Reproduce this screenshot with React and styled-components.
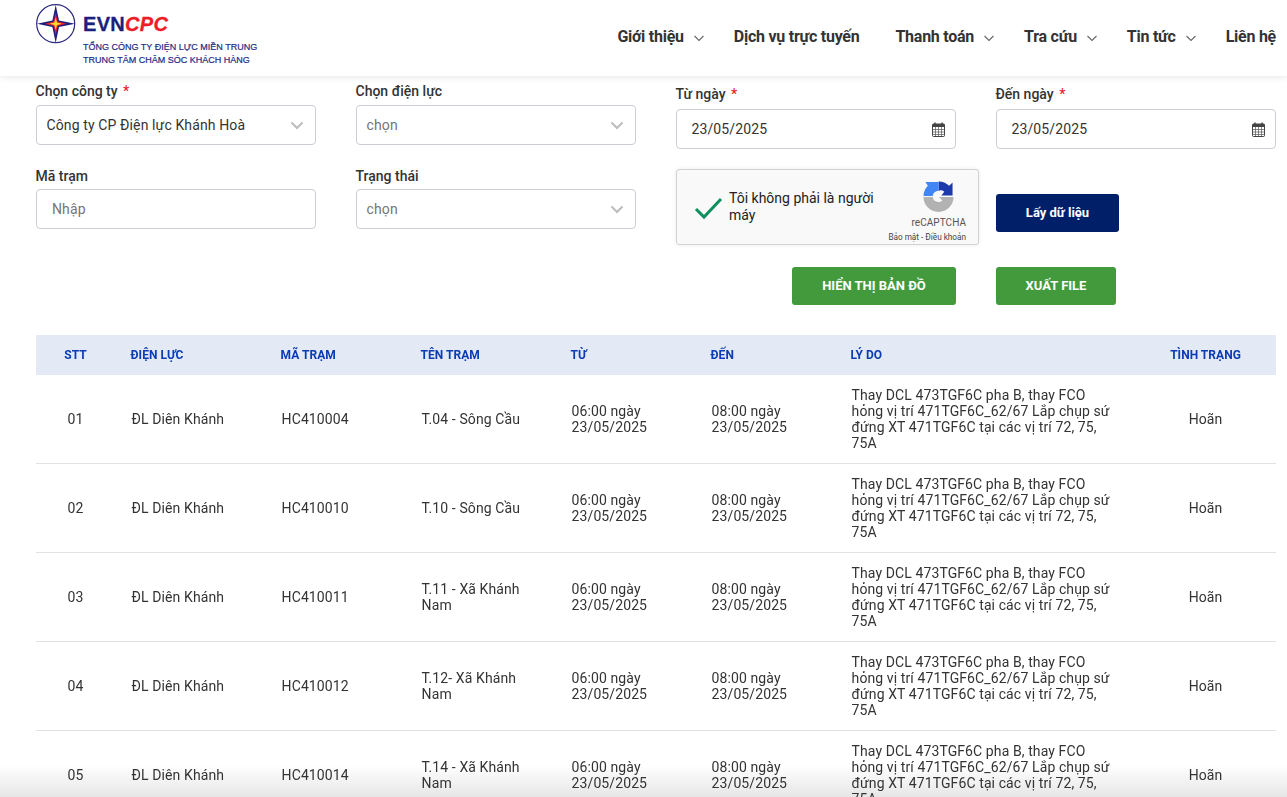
import React from "react";
import styled, { createGlobalStyle } from "styled-components";

const Global = createGlobalStyle`
  html, body { margin: 0; padding: 0; height: 100%; overflow: hidden; background: #fff; }
  body { font-family: Roboto, "Liberation Sans", sans-serif; color: #333; }
  * { box-sizing: border-box; }
`;

const Header = styled.header`
  height: 76px; display: flex; align-items: center; justify-content: space-between;
  padding: 0 11px 0 36px; background: #fff; box-shadow: 0 1px 7px rgba(0,0,0,.1);
  position: relative; z-index: 2;
`;
const Brand = styled.div`display: flex; align-items: flex-start; gap: 7px; height: 76px; padding-top: 4px;`;
const BrandText = styled.div`display: flex; flex-direction: column; padding-top: 9px;`;
const BrandName = styled.div`
  font-family: "Liberation Sans", Arial, sans-serif; font-size: 20px; line-height: 22px; font-weight: 700;
  color: #1b1f7e; letter-spacing: .3px; margin-bottom: 6px; -webkit-text-stroke: .3px currentColor;
`;
const BrandRed = styled.span`color: #ee1c25; font-style: italic;`;
const BrandLine = styled.div`
  font-family: "Liberation Sans", Arial, sans-serif; font-size: 9px; line-height: 13px; color: #1f2a86;
  white-space: nowrap; -webkit-text-stroke: .2px currentColor;
`;
const Nav = styled.nav`display: flex; align-items: center; height: 68px; margin-top: -4px; gap: 29px;`;
const NavItem = styled.div`
  display: flex; align-items: center; gap: 9px; font-size: 16px; font-weight: 700; color: #333;
  white-space: nowrap; letter-spacing: -.25px; padding-right: ${p => p.$pad || 0}px;
`;
const NavChevron = styled.svg`width: 12px; height: 12px; fill: none; stroke: #666; stroke-width: 1.1; margin-top: 3px;`;

const Form = styled.section`
  display: grid; grid-template-columns: repeat(4, 280px); column-gap: 40px; padding: 0 0 0 36px;
`;
const Column = styled.div`display: flex; flex-direction: column; padding-top: ${p => p.$top}px;`;
const Label = styled.label`
  display: block; font-size: 14px; font-weight: 500; line-height: 16px; color: #333; text-indent: -.5px;
  margin-bottom: ${p => p.$gap}px; margin-top: ${p => p.$mt || 0}px;
`;
const Required = styled.span`color: #f5222d; margin-left: 2px;`;
const Control = styled.div`
  height: 40px; border: 1px solid #ccced6; border-radius: 4px; display: flex; align-items: center;
  justify-content: space-between; padding: 0 ${p => p.$right}px 0 ${p => p.$left}px; font-size: 14px; letter-spacing: .12px;
  color: ${p => p.$muted ? "#757575" : "#333"}; background: #fff; flex: none;
`;
const SelectChevron = styled.svg`width: 14px; height: 14px; fill: none; stroke: #bcbcbc; stroke-width: 2;`;
const CalendarIcon = styled.svg`width: 13px; height: 15px;`;

const Captcha = styled.div`
  width: 303px; height: 76px; margin-top: 20px; border: 1px solid #d3d3d3; border-radius: 3px; background: #f9f9f9;
  box-shadow: 0 0 4px rgba(0,0,0,.08); display: flex; align-items: center; padding: 0 12px 0 17px; flex: none;
`;
const CaptchaCheck = styled.svg`width: 29px; height: 24px; flex: none; margin-top: 1px;`;
const CaptchaText = styled.div`width: 165px; margin-left: 6px; font-size: 14px; line-height: 17px; color: #222; margin-top: -1px;`;
const CaptchaBrand = styled.div`
  margin-left: auto; display: flex; flex-direction: column; align-items: flex-end; height: 100%; padding-top: 11px;
`;
const CaptchaLogo = styled.svg`width: 31px; height: 31px; margin-right: 12px;`;
const CaptchaName = styled.div`font-size: 10px; line-height: 12px; color: #555; margin-top: 5px; letter-spacing: .05px;`;
const CaptchaTerms = styled.div`font-size: 8.2px; line-height: 10px; color: #444; margin-top: 3px; white-space: nowrap;`;

const Button = styled.button`
  height: 38px; width: ${p => p.$w}px; border: 0; border-radius: 3px; color: #fff; font-family: inherit;
  font-weight: 700; font-size: ${p => p.$size}px; background: ${p => p.$bg}; padding: 0 0 2px; flex: none;
  margin-top: ${p => p.$mt}px; align-self: ${p => p.$end ? "flex-end" : "flex-start"};
`;

const Table = styled.table`
  width: 1240px; table-layout: fixed; border-collapse: separate; border-spacing: 0; margin: 30px 0 0 36px;
  font-size: 14px; color: #333; position: relative; z-index: 1;
`;
const HeadRow = styled.tr`height: 40px;`;
const Th = styled.th`
  background: #e3e9f5; padding: 0 ${p => p.$center ? 1 : 15}px 0 ${p => p.$center ? 0 : 14.6}px;
  font-size: 12px; font-weight: 700; color: #0b3cb4; line-height: 14px; letter-spacing: .03px;
  text-align: ${p => p.$center ? "center" : "left"}; white-space: nowrap; overflow: visible;
`;
const Row = styled.tr`height: 89px;`;
const Td = styled.td`
  border-bottom: 1px solid #e2e2e2; line-height: 16px; letter-spacing: .1px;
  text-align: ${p => p.$center ? "center" : "left"};
  padding: 0 ${p => p.$center ? 1 : (p.$right || 16)}px 0 ${p => p.$center ? 0 : 15.6}px;
`;
const BottomFade = styled.div`
  position: fixed; left: 0; right: 0; bottom: 0; height: 32px; pointer-events: none; z-index: 0;
  background: linear-gradient(to bottom, rgba(230,230,230,0), rgba(230,230,230,1));
`;

const Logo = () => (
  <svg width="40" height="40" viewBox="0 0 40 40">
    <circle cx="19.7" cy="19.7" r="19" fill="#fff" stroke="#2a2a7e" strokeWidth="1.2" />
    <path d="M19.7 1 L23 16.4 L39 19.700 L23 23 L19.700 39 L16.400 23 L1 19.700 L16.400 16.400 Z" fill="#1b1f7e" />
    <path d="M19.700 9 L21.700 17.500 L30.500 19.700 L21.700 21.900 L19.700 31 L17.700 21.900 L9 19.700 L17.700 17.500 Z" fill="#e8202a" />
    <path d="M19.700 13.500 L21 18.400 L26 19.700 L21 21 L19.700 26 L18.400 21 L13.500 19.700 L18.400 18.400 Z" fill="#ffd92e" />
  </svg>
);
const Chevron = () => <NavChevron viewBox="0 0 12 12"><path d="M1.500 4l4.500 4.500L10.500 4" /></NavChevron>;
const SelectArrow = () => <SelectChevron viewBox="0 0 14 14"><path d="M1.500 4.500L7 10l5.500-5.500" /></SelectChevron>;
const Calendar = () => (
  <CalendarIcon viewBox="0 0 13 15">
    <rect x=".5" y="2" width="12" height="12.500" rx="1" fill="#fff" stroke="#444" />
    <rect x=".5" y="2" width="12" height="3" fill="#444" />
    <path d="M3 .5v3M10 .5v3" stroke="#444" strokeWidth="1.400" />
    <path d="M.5 7.500h12M.5 10h12M.5 12.500h12M3.500 5v9M6.500 5v9M9.500 5v9" stroke="#555" strokeWidth=".7" />
  </CalendarIcon>
);

const reason = "Thay DCL 473TGF6C pha B, thay FCO hỏng vị trí 471TGF6C_62/67 Lắp chụp sứ đứng XT 471TGF6C tại các vị trí 72, 75, 75A";
const rows = [
  ["01", "HC410004", "T.04 - Sông Cầu"],
  ["02", "HC410010", "T.10 - Sông Cầu"],
  ["03", "HC410011", "T.11 - Xã Khánh Nam"],
  ["04", "HC410012", "T.12- Xã Khánh Nam"],
  ["05", "HC410014", "T.14 - Xã Khánh Nam"],
];
const widths = [80, 150, 140, 150, 140, 140, 300, 140];

export default function App() {
  return (
    <>
      <Global />
      <Header>
        <Brand>
          <Logo />
          <BrandText>
            <BrandName>EVN<BrandRed>CPC</BrandRed></BrandName>
            <BrandLine>TỔNG CÔNG TY ĐIỆN LỰC MIỀN TRUNG</BrandLine>
            <BrandLine>TRUNG TÂM CHĂM SÓC KHÁCH HÀNG</BrandLine>
          </BrandText>
        </Brand>
        <Nav>
          <NavItem>Giới thiệu <Chevron /></NavItem>
          <NavItem $pad={7}>Dịch vụ trực tuyến</NavItem>
          <NavItem>Thanh toán <Chevron /></NavItem>
          <NavItem>Tra cứu <Chevron /></NavItem>
          <NavItem>Tin tức <Chevron /></NavItem>
          <NavItem>Liên hệ</NavItem>
        </Nav>
      </Header>
      <Form>
        <Column $top={7}>
          <Label $gap={6}>Chọn công ty <Required>*</Required></Label>
          <Control $left={9.5} $right={11}>Công ty CP Điện lực Khánh Hoà <SelectArrow /></Control>
          <Label $mt={23} $gap={5}>Mã trạm</Label>
          <Control $left={15} $right={11} $muted>Nhập</Control>
        </Column>
        <Column $top={7}>
          <Label $gap={6}>Chọn điện lực</Label>
          <Control $left={9.5} $right={11} $muted>chọn <SelectArrow /></Control>
          <Label $mt={23} $gap={5}>Trạng thái</Label>
          <Control $left={9.5} $right={11} $muted>chọn <SelectArrow /></Control>
        </Column>
        <Column $top={10}>
          <Label $gap={7}>Từ ngày <Required>*</Required></Label>
          <Control $left={14.5} $right={10}>23/05/2025 <Calendar /></Control>
          <Captcha>
            <CaptchaCheck viewBox="0 0 29 24">
              <path d="M2 13l8 8L27 3" fill="none" stroke="#0f8f5c" strokeWidth="3" />
            </CaptchaCheck>
            <CaptchaText>Tôi không phải là người máy</CaptchaText>
            <CaptchaBrand>
              <CaptchaLogo viewBox="0 0 32 32">
                <path d="M16 .5A15.500 15.500 0 0 1 27 5l3.500-3.500V15H19l3-4A6 6 0 0 0 16 10Z" fill="#1c3aa9" />
                <path d="M.5 15.500A15.500 15.500 0 0 1 5 5L2.500 1H16v9a6 6 0 0 0-6 5.500Z" fill="#4285f4" />
                <path d="M.5 16.500H10a6 6 0 0 0 10 3.500L16.500 16.500H31.500A15.500 15.500 0 0 1 .5 16.500Z" fill="#b2b2b2" />
              </CaptchaLogo>
              <CaptchaName>reCAPTCHA</CaptchaName>
              <CaptchaTerms>Bảo mật - Điều khoản</CaptchaTerms>
            </CaptchaBrand>
          </Captcha>
          <Button $w={164} $size={13} $bg="#439a3c" $mt={22} $end>HIỂN THỊ BẢN ĐỒ</Button>
        </Column>
        <Column $top={10}>
          <Label $gap={7}>Đến ngày <Required>*</Required></Label>
          <Control $left={14.5} $right={10}>23/05/2025 <Calendar /></Control>
          <Button $w={123} $size={13} $bg="#001f69" $mt={45}>Lấy dữ liệu</Button>
          <Button $w={120} $size={13} $bg="#439a3c" $mt={35}>XUẤT FILE</Button>
        </Column>
      </Form>
      <Table>
        <colgroup>{widths.map((w, i) => <col key={i} style={{ width: w }} />)}</colgroup>
        <thead>
          <HeadRow>
            <Th $center>STT</Th><Th>ĐIỆN LỰC</Th><Th>MÃ TRẠM</Th><Th>TÊN TRẠM</Th>
            <Th>TỪ</Th><Th>ĐẾN</Th><Th>LÝ DO</Th><Th $center>TÌNH TRẠNG</Th>
          </HeadRow>
        </thead>
        <tbody>
          {rows.map(([n, code, name]) => (
            <Row key={n}>
              <Td $center>{n}</Td>
              <Td>ĐL Diên Khánh</Td>
              <Td>{code}</Td>
              <Td $right={30}>{name}</Td>
              <Td $right={30}>06:00 ngày 23/05/2025</Td>
              <Td $right={30}>08:00 ngày 23/05/2025</Td>
              <Td $right={24}>{reason}</Td>
              <Td $center>Hoãn</Td>
            </Row>
          ))}
        </tbody>
      </Table>
      <BottomFade />
    </>
  );
}
